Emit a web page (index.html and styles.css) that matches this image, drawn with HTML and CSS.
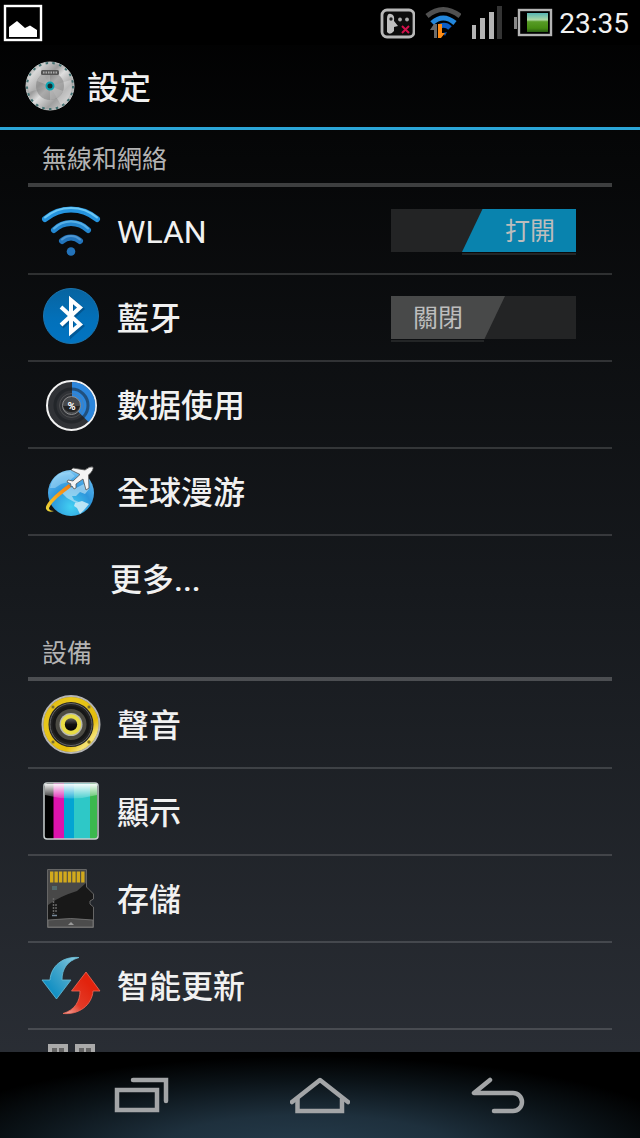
FILE: index.html
```
<!DOCTYPE html>
<html lang="zh-Hant">
<head>
    <meta charset="UTF-8">
    <meta name="viewport" content="width=device-width, initial-scale=1.0">
    <title>設定</title>
    <link rel="stylesheet" href="styles.css">
</head>
<body>
    <div class="statusbar">
        <svg class="notice" width="40" height="38" viewBox="0 0 40 38">
            <rect x="2" y="2" width="36" height="34" fill="#000" stroke="#fff" stroke-width="2.4"/>
            <path d="M6 33V23L14 17L22 24L27 21.500L34 26V33Z" fill="#fff"/>
        </svg>
        <div class="status-icons">
            <svg width="36" height="32" viewBox="0 0 36 32">
                <rect x="3" y="3" width="32" height="27" rx="5" fill="#0c0c0c" stroke="#b8b8b8" stroke-width="2.800"/>
                <path d="M8 12Q8 6 12 7Q16 8 15 14L19 19L15 20V24Q11 29 8 25Z" fill="#c0c0c0"/>
                <circle cx="12" cy="12" r="1.700" fill="#222"/>
                <circle cx="21" cy="12.500" r="1.900" fill="#aaa"/>
                <circle cx="28" cy="12.500" r="1.900" fill="#aaa"/>
                <path d="M23 19L30 26M30 19L23 26" stroke="#d0104a" stroke-width="2"/>
            </svg>
            <svg width="36" height="34" viewBox="0 0 36 34" fill="none">
                <path d="M2 10Q18 -3 35 10" stroke="#505050" stroke-width="5"/>
                <path d="M7 17Q18 7 30 17" stroke="#2387dc" stroke-width="5"/>
                <path d="M15 20Q21 18 25 22" stroke="#0c5cc4" stroke-width="5"/>
                <path d="M18 27L22 26L20 30Z" fill="#0754b8"/>
                <path d="M5 24L9 18H12V32H9V24Z" fill="#6b6b6b"/>
                <path d="M13 18H17V27H20L16 32H13Z" fill="#ff8b13"/>
            </svg>
            <svg width="32" height="34" viewBox="0 0 32 34">
                <path d="M1 19h4v14h-4zM9 12h5v21h-5zM18 6h5v27h-5z" fill="#b4b4b4"/>
                <path d="M26 0h5v33h-5z" fill="#343434"/>
            </svg>
            <svg width="40" height="30" viewBox="0 0 40 30">
                <defs>
                    <linearGradient id="charge" x1="0" y1="0" x2="0" y2="1">
                        <stop offset="0" stop-color="#56b5b4"/>
                        <stop offset=".36" stop-color="#add8a4"/>
                        <stop offset=".46" stop-color="#579c26"/>
                        <stop offset=".8" stop-color="#458c12"/>
                        <stop offset="1" stop-color="#285c12"/>
                    </linearGradient>
                </defs>
                <path d="M1 9h3v12h-3z" fill="#888"/>
                <rect x="6" y="2" width="32" height="25" fill="#000" stroke="#b5b5b5" stroke-width="2.400"/>
                <rect x="14" y="5" width="21" height="19" fill="url(#charge)"/>
            </svg>
            <time class="clock">23:35</time>
        </div>
    </div>

    <header class="titlebar">
        <svg width="50" height="50" viewBox="0 0 50 50">
            <defs>
                <linearGradient id="blade" x1="0" y1="0" x2="1" y2="1">
                    <stop offset="0" stop-color="#8d8d8d"/>
                    <stop offset=".2" stop-color="#d0d0d0"/>
                    <stop offset=".38" stop-color="#9c9c9c"/>
                    <stop offset=".5" stop-color="#dedede"/>
                    <stop offset=".7" stop-color="#a0a0a0"/>
                    <stop offset="1" stop-color="#e8e8e8"/>
                </linearGradient>
            </defs>
            <circle cx="25" cy="25" r="24" fill="url(#blade)" stroke="#c5c9c9"/>
            <circle cx="25" cy="25" r="23" fill="none" stroke="#406f70" stroke-width="2" stroke-dasharray="2.500 4.380"/>
            <path d="M4 31A22 22 0 0 1 15 6L25 25Z" fill="#fff" opacity=".18"/>
            <path d="M46 19A22 22 0 0 1 36 44L25 25Z" fill="#fff" opacity=".28"/>
            <circle cx="25" cy="25" r="14" fill="#777" opacity=".5"/>
            <path d="M25 25L12 20A14 14 0 0 1 25 11ZM25 25L38 30A14 14 0 0 1 25 39Z" fill="#ddd" opacity=".3"/>
            <rect x="16" y="9" width="18" height="5" rx="1.500" fill="#555"/>
            <path d="M18 11.500H32" stroke="#aaa" stroke-width="2" stroke-dasharray="1.500 1"/>
            <circle cx="25" cy="25" r="3.500" fill="#153033" stroke="#08a4b2" stroke-width="2"/>
        </svg>
        <h1>設定</h1>
    </header>

    <main class="settings">
        <section>
            <h2>無線和網絡</h2>
            <ul>
                <li class="row">
                    <svg class="icon" viewBox="0 0 60 60" fill="none" stroke-linecap="round">
                        <path d="M4 18A40 40 0 0 1 56 18" stroke="#2594df" stroke-width="6"/>
                        <path d="M4 16.500A40 40 0 0 1 56 16.500" stroke="#6bc7f5" stroke-width="2"/>
                        <path d="M13 29A24 24 0 0 1 47 29" stroke="#2386cf" stroke-width="6"/>
                        <path d="M13 27.500A24 24 0 0 1 47 27.500" stroke="#57afe6" stroke-width="2"/>
                        <path d="M21 40A13 13 0 0 1 39 40" stroke="#2274bb" stroke-width="6"/>
                        <path d="M21 38.500A13 13 0 0 1 39 38.500" stroke="#4f96d1" stroke-width="2"/>
                        <circle cx="30" cy="50.500" r="4.300" fill="#2373ba"/>
                    </svg>
                    <label class="name latin" for="wlan">WLAN</label>
                    <label class="switch">
                        <input id="wlan" type="checkbox" checked>
                        <span class="thumb"><span class="on">打開</span><span class="off">關閉</span></span>
                    </label>
                </li>
                <li class="row">
                    <svg class="icon" viewBox="0 0 60 60">
                        <defs>
                            <linearGradient id="bt" x1="0" y1="0" x2="0" y2="1">
                                <stop offset="0" stop-color="#0864a0"/>
                                <stop offset=".6" stop-color="#0271bb"/>
                                <stop offset="1" stop-color="#0274c2"/>
                            </linearGradient>
                        </defs>
                        <circle cx="30" cy="28" r="27.500" fill="url(#bt)" stroke="#1b74ae"/>
                        <path d="M20 19L40 37L30 46V11L40 20L20 38" fill="none" stroke="#023f70" stroke-width="4" opacity=".5" transform="translate(1 1)"/>
                        <path d="M20 19L39 36.500L30 44V12L39 19.500L20 37" fill="none" stroke="#fff" stroke-width="4"/>
                    </svg>
                    <label class="name" for="bluetooth">藍牙</label>
                    <label class="switch">
                        <input id="bluetooth" type="checkbox">
                        <span class="thumb"><span class="on">打開</span><span class="off">關閉</span></span>
                    </label>
                </li>
                <li>
                    <a class="row" href="#data">
                        <svg class="icon" viewBox="0 0 60 60">
                            <circle cx="30.500" cy="30.500" r="24.500" fill="#303236" stroke="#f2f2f2" stroke-width="2"/>
                            <path d="M31 30.500V7A23.500 23.500 0 0 1 47.500 47Z" fill="#2c86dc"/>
                            <circle cx="30.500" cy="30.500" r="16.500" fill="none" stroke="#15191e" stroke-width="3" opacity=".5"/>
                            <circle cx="30.500" cy="30.500" r="12" fill="none" stroke="#777" stroke-width="1" opacity=".4"/>
                            <circle cx="30.500" cy="30.500" r="9" fill="#46484b" stroke="#8d8d8d"/>
                            <path d="M22 31A9 9 0 0 0 39 31Z" fill="#222"/>
                            <text x="30.500" y="34.500" class="percent">%</text>
                        </svg>
                        <span class="name">數据使用</span>
                    </a>
                </li>
                <li>
                    <a class="row" href="#roaming">
                        <svg class="icon" viewBox="0 0 60 60">
                            <defs>
                                <radialGradient id="globe" cx=".5" cy=".8" r=".85">
                                    <stop offset="0" stop-color="#42d0f2"/>
                                    <stop offset=".5" stop-color="#2d96dc"/>
                                    <stop offset=".8" stop-color="#58b2ec"/>
                                    <stop offset="1" stop-color="#a2dcf8"/>
                                </radialGradient>
                                <linearGradient id="trail" x1="1" y1="0" x2="0" y2="1">
                                    <stop offset="0" stop-color="#f47a12"/>
                                    <stop offset=".5" stop-color="#faa31a"/>
                                    <stop offset="1" stop-color="#e9dc3c"/>
                                </linearGradient>
                            </defs>
                            <circle cx="30" cy="31" r="23" fill="url(#globe)"/>
                            <path d="M9 26Q11 15 20 11L29 10L34 14L27 20L20 22L14 26Z" fill="#c9ebfb" opacity=".4"/>
                            <path d="M20 30L28 25L35 26L43 22L48 27L44 32L39 30L35 34L31 34L33 38L38 40L35 41L26 36Z" fill="#c8e8f6" opacity=".6"/>
                            <path d="M34 41L41 39L48 42L43 48L39 52L36 46L33 44Z" fill="#d3edf8" opacity=".85"/>
                            <path d="M28 22C17 30 4 41 5 47Q7 51 13 49Q8 49 8 46C11 39 21 32 30 25Z" fill="url(#trail)"/>
                            <path d="M52 5Q49 4 44 8L32 6L30 8L39 12.500L32 19L27 18L26 20L30 22L29 24L31 24L33 27L35 26L35 22L42 17L45 28L48 26L47.500 13Q53 8 52 5Z" fill="#f4f4f4" stroke="#555" stroke-width=".8"/>
                        </svg>
                        <span class="name">全球漫游</span>
                    </a>
                </li>
                <li><a class="row more" href="#more"><span class="name">更多...</span></a></li>
            </ul>
        </section>

        <section>
            <h2>設備</h2>
            <ul>
                <li>
                    <a class="row" href="#sound">
                        <svg class="icon" viewBox="0 0 60 60">
                            <defs>
                                <linearGradient id="rim" x1="0" y1="0" x2="1" y2="1">
                                    <stop offset="0" stop-color="#dfb60e"/>
                                    <stop offset=".25" stop-color="#e8c71b"/>
                                    <stop offset=".7" stop-color="#e5bd0c"/>
                                    <stop offset=".85" stop-color="#f5e277"/>
                                    <stop offset="1" stop-color="#e5bd0c"/>
                                </linearGradient>
                                <linearGradient id="dome" x1="0" y1="0" x2="0" y2="1">
                                    <stop offset="0" stop-color="#777"/>
                                    <stop offset=".5" stop-color="#111"/>
                                    <stop offset="1" stop-color="#000"/>
                                </linearGradient>
                            </defs>
                            <circle cx="30" cy="29.500" r="28.500" fill="#777" stroke="#b5b5b5" stroke-width="2"/>
                            <circle cx="30" cy="29.500" r="25" fill="#252525" stroke="url(#rim)" stroke-width="5"/>
                            <circle cx="30" cy="29.500" r="21" fill="#222" stroke="#656565" stroke-width="1"/>
                            <circle cx="30" cy="29.500" r="17" fill="#4c4b43" stroke="#171717" stroke-width="3"/>
                            <g fill="#625829" stroke="#bba22e">
                                <circle cx="12" cy="12" r="1.500"/><circle cx="48" cy="12" r="1.500"/>
                                <circle cx="12" cy="47" r="1.500"/><circle cx="48" cy="47" r="1.500"/>
                            </g>
                            <circle cx="30" cy="29.500" r="11.500" fill="#b9b9b0"/>
                            <circle cx="30" cy="29.500" r="8.200" fill="url(#dome)" stroke="#e8dc45" stroke-width="4"/>
                        </svg>
                        <span class="name">聲音</span>
                    </a>
                </li>
                <li>
                    <a class="row" href="#display">
                        <svg class="icon" viewBox="0 0 60 60">
                            <defs>
                                <linearGradient id="gloss" x1="0" y1="0" x2="0" y2="1">
                                    <stop offset="0" stop-color="#fff" stop-opacity=".95"/>
                                    <stop offset="1" stop-color="#fff" stop-opacity=".15"/>
                                </linearGradient>
                            </defs>
                            <rect x="3" y="1" width="54" height="56" rx="3" fill="#000"/>
                            <path d="M12.500 1h10.500v56h-10.500z" fill="#dc13ad"/>
                            <path d="M23 1h10v56h-10z" fill="#02a4d3"/>
                            <path d="M33 1h16v56h-16z" fill="#2ec8c7"/>
                            <path d="M49 1h7v56h-7z" fill="#3bb84e"/>
                            <path d="M4 2H56V13Q30 20 4 13Z" fill="url(#gloss)"/>
                            <rect x="3" y="1" width="54" height="56" rx="3" fill="none" stroke="#c9d0d0" stroke-width="1.500"/>
                        </svg>
                        <span class="name">顯示</span>
                    </a>
                </li>
                <li>
                    <a class="row" href="#storage">
                        <svg class="icon" viewBox="0 0 60 60">
                            <path d="M6.500 .5H45.500V18L52.500 25V30L49 32V35L52.500 38V58.500H6.500Z" fill="#181818" stroke="#666"/>
                            <path d="M7 1H45V14L36 22Q20 27 10 34L7 36Z" fill="#484848"/>
                            <path d="M7 51Q30 48 52 51V58H7Z" fill="#4c4c4c" stroke="#777" stroke-width=".8"/>
                            <path d="M9 8H44" stroke="#d2a91c" stroke-width="11" stroke-dasharray="3.400 1.050"/>
                            <path d="M11 17h5v4h-5z" fill="#536a6c"/>
                            <path d="M12.500 29V45M15 35V44" stroke="#666" stroke-width="1.500" stroke-dasharray="2 1"/>
                            <path d="M11 46.500H16" stroke="#789" stroke-width="1.500"/>
                            <path d="M27 56L30 53L33 56Z" fill="#999"/>
                        </svg>
                        <span class="name">存儲</span>
                    </a>
                </li>
                <li>
                    <a class="row" href="#update">
                        <svg class="icon" viewBox="0 0 60 60">
                            <defs>
                                <linearGradient id="down" x1="1" y1="0" x2=".2" y2=".7">
                                    <stop offset="0" stop-color="#8fd0e4"/>
                                    <stop offset=".5" stop-color="#4ba9cc"/>
                                    <stop offset="1" stop-color="#1591c4"/>
                                </linearGradient>
                                <linearGradient id="up" x1="0" y1="1" x2=".7" y2=".3">
                                    <stop offset="0" stop-color="#f5b7af"/>
                                    <stop offset=".45" stop-color="#e33b28"/>
                                    <stop offset="1" stop-color="#e2230d"/>
                                </linearGradient>
                            </defs>
                            <path d="M38 1.500C22 0 10 10 9 24H1L15.500 43L30 24H21C21 13 26 5 38 1.500Z" fill="url(#down)" stroke="#69bcd7" stroke-width=".8"/>
                            <path d="M22 57.500C38 59 51 49 52 35H59L45 16L30.500 35H39C39 45 34 54 22 57.500Z" fill="url(#up)" stroke="#f06a58" stroke-width=".8"/>
                        </svg>
                        <span class="name">智能更新</span>
                    </a>
                </li>
                <li>
                    <a class="row" href="#apps" aria-label="應用">
                        <svg class="icon" viewBox="0 0 60 60">
                            <path d="M7 1h20v20h-20zM34 1h20v20h-20z" fill="#aaa"/>
                            <path d="M11 5h5v4h-5zM18 5h5v4h-5zM38 5h5v4h-5zM45 5h5v4h-5z" fill="#666"/>
                        </svg>
                    </a>
                </li>
            </ul>
        </section>
    </main>

    <nav class="navbar">
        <button type="button" aria-label="最近">
            <svg width="56" height="38" viewBox="0 0 56 38">
                <path d="M3 14H43V34H3Z" stroke-linejoin="miter"/>
                <path d="M19 4H52V25" stroke-linejoin="miter"/>
            </svg>
        </button>
        <button type="button" aria-label="主頁">
            <svg width="60" height="38" viewBox="0 0 60 38">
                <path d="M2 26L30 4L58 26"/>
                <path d="M7.500 23V35H52V23" stroke-linejoin="miter"/>
            </svg>
        </button>
        <button type="button" aria-label="返回">
            <svg width="54" height="38" viewBox="0 0 54 38">
                <path d="M19 4L3 17H42A9 9 0 0 1 42 35H23"/>
            </svg>
        </button>
    </nav>
</body>
</html>
```
FILE: styles.css
```
*{
    box-sizing: border-box;
}
body{
    display: flex;
    flex-direction: column;
    height: 100vh;
    margin: 0;
    overflow: hidden;
    color: #f1f1f1;
    background: linear-gradient(#000, #060708 14%, #16191d 52%, #2a2e35 94%);
    font-family: Roboto, "Noto Sans CJK TC", sans-serif;
}
h1, h2, ul{
    margin: 0;
    padding: 0;
}
ul{
    list-style: none;
}
svg{
    display: block;
    flex: none;
}

/* status bar */
.statusbar{
    display: flex;
    flex: none;
    align-items: center;
    justify-content: space-between;
    height: 45px;
    padding: 0 11px 0 3px;
    background: #000;
}
.status-icons{
    display: flex;
    align-items: center;
    gap: 10px;
}
.clock{
    margin-left: -4px;
    padding-top: 2px;
    font-size: 28px;
    line-height: 32px;
}

/* title */
.titlebar{
    display: flex;
    flex: none;
    align-items: center;
    gap: 12px;
    height: 85px;
    padding: 0 25px;
    border-bottom: 3px solid #2ba6d8;
}
.titlebar h1{
    padding-top: 4px;
    font-size: 32px;
    font-weight: 500;
    line-height: 40px;
}

/* list */
.settings{
    flex: 1;
    min-height: 0;
    padding: 0 28px;
    overflow: hidden;
}
.settings h2{
    height: 57px;
    padding: 12px 14px 0;
    border-bottom: 4px solid rgba(255, 255, 255, 0.22);
    color: #b3b3b3;
    font-size: 25px;
    font-weight: 400;
    line-height: 36px;
}
.settings ul{
    padding: 1px 0;
}
.row{
    display: flex;
    align-items: center;
    gap: 16px;
    height: 87px;
    padding: 0 36px 0 13px;
    border-bottom: 2px solid rgba(255, 255, 255, 0.15);
    color: inherit;
    text-decoration: none;
}
.row.more{
    padding-left: 82px;
    border-bottom-color: transparent;
}
.icon{
    width: 60px;
    height: 60px;
}
.name{
    flex: 1;
    padding-top: 3px;
    font-size: 32px;
    font-weight: 500;
    line-height: 40px;
}
.latin{
    font-weight: 400;
}
.percent{
    fill: #fff;
    font-size: 11px;
    font-weight: 700;
    text-anchor: middle;
}

/* switch */
.switch{
    display: flex;
    position: relative;
    width: 185px;
    height: 43px;
    background: #232425;
}
.switch input{
    position: absolute;
    inset: 0;
    width: 100%;
    height: 100%;
    margin: 0;
    opacity: 0;
}
.thumb{
    width: 114px;
    padding: 1px 0 0 22px;
    background: #484949;
    clip-path: polygon(0 0, 100% 0, 82% 100%, 0 100%);
    color: #bdbdbd;
    font-size: 25px;
    line-height: 43px;
}
.on{
    display: none;
}
.switch input:checked + .thumb{
    margin-left: auto;
    padding: 1px 21px 0 0;
    background: #0983ae;
    clip-path: polygon(18% 0, 100% 0, 100% 100%, 0 100%);
    text-align: right;
}
.switch input:checked + .thumb .on{
    display: inline;
}
.switch input:checked + .thumb .off{
    display: none;
}
.switch::after{
    content: "";
    position: absolute;
    top: 100%;
    left: 0;
    width: 93px;
    height: 1px;
    border-bottom: 2px solid #232526;
}
.switch:has(input:checked)::after{
    left: auto;
    right: 0;
    width: 114px;
}

/* navigation */
.navbar{
    display: flex;
    flex: none;
    height: 86px;
    padding: 0 53px;
    background: radial-gradient(ellipse 62% 110% at 48% 115%, #263c4c, #1e303d 38%, #0b1318 74%, #000) #000;
}
.navbar button{
    display: flex;
    flex: 1;
    align-items: center;
    justify-content: center;
    padding: 0;
    border: 0;
    background: none;
}
.navbar svg{
    fill: none;
    stroke: #a3a5a7;
    stroke-width: 4.500;
    stroke-linecap: round;
    stroke-linejoin: round;
}
```
